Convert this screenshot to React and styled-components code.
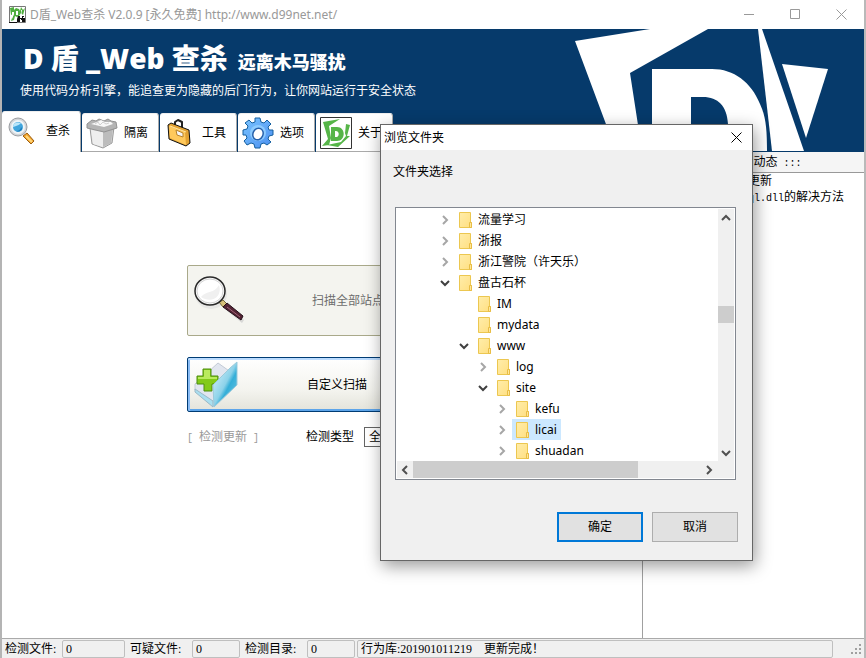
import React from 'react';
import styled, { createGlobalStyle } from 'styled-components';

const uiFont = '"Noto Sans", "Noto Sans CJK SC", sans-serif';
const songFont = '"Liberation Serif", "Noto Sans CJK SC", serif';

const GlobalStyle = createGlobalStyle`
    * {
        box-sizing: border-box;
    }
    body {
        margin: 0;
        background: #fff;
        color: #000;
        font-family: ${songFont};
        font-size: 12px;
        line-height: 16px;
    }
    button, select {
        font: inherit;
        color: inherit;
    }
    ul {
        margin: 0;
        padding: 0;
        list-style: none;
    }
`;

const Window = styled.div`
    position: relative;
    display: flex;
    flex-direction: column;
    min-height: 100vh;
    border-left: 2px solid #b4b4b4;
    border-right: 2px solid #b9b9b9;
    overflow: hidden;
`;

const TitleBar = styled.header`
    display: flex;
    align-items: center;
    height: 29px;
    padding-left: 7px;
    color: #999;
    font-family: ${uiFont};
`;

const WindowTitle = styled.h1`
    flex: 1;
    margin: 0 0 0 4px;
    font-size: 12px;
    font-weight: 400;
    white-space: nowrap;
`;

const CaptionButton = styled.button`
    display: flex;
    align-items: center;
    justify-content: center;
    width: ${({ $width }) => $width || 46}px;
    height: 25px;
    padding: 0;
    border: 0;
    background: transparent;
`;

const Banner = styled.div`
    display: flex;
    justify-content: space-between;
    height: 123px;
    background: #063a6b;
    color: #fff;
`;

const BannerMain = styled.div`
    display: flex;
    flex-direction: column;
    justify-content: space-between;
    white-space: nowrap;
`;

const BannerText = styled.div`
    padding: 9px 0 0 18px;
    font-family: "Noto Sans CJK SC", sans-serif;
`;

const Brand = styled.div`
    display: flex;
    align-items: baseline;
    gap: 10px;
    padding-left: 3px;
    font-size: 28px;
    font-weight: 900;
    line-height: 40px;
`;

const BrandName = styled.span`
    font-family: "Open Sans", "Noto Sans CJK SC", sans-serif;
    font-weight: 800;
`;

const Slogan = styled.span`
    font-size: 18px;
`;

const Intro = styled.p`
    margin: 0;
    line-height: 18px;
`;

const BannerLogo = styled.svg`
    flex: none;
    width: 304px;
    height: 122px;
`;

const Tabs = styled.div`
    display: flex;
    align-items: flex-end;
    gap: 1px;
`;

const Tab = styled.button`
    display: flex;
    align-items: center;
    gap: 6px;
    width: ${({ $active }) => ($active ? 79 : 77)}px;
    height: ${({ $active }) => ($active ? 41 : 39)}px;
    padding: 0 0 ${({ $active }) => ($active ? 3 : 0)}px ${({ $active }) => ($active ? 6 : 4)}px;
    border: 1px solid #aaa;
    border-width: 1px 1px ${({ $active }) => ($active ? 0 : 1)}px 0;
    border-top-color: #eee;
    border-radius: 3px 3px 0 0;
    background: #fff;
    color: #000;
    white-space: nowrap;
`;

const TabIcon = styled.span`
    display: flex;
    flex: none;
    justify-content: ${({ $active }) => ($active ? 'flex-start' : 'center')};
    width: 32px;
`;

const Body = styled.main`
    display: flex;
    flex: 1;
`;

const ScanPane = styled.section`
    flex: 1;
    padding: 113px 0 0 185px;
`;

const ScanButton = styled.button`
    display: flex;
    align-items: center;
    gap: ${({ $gap }) => $gap}px;
    width: 270px;
    height: ${({ $height }) => $height}px;
    margin-bottom: 21px;
    padding: 0 6px;
    border: 1px solid #a9a98a;
    border-radius: 2px;
    background: #f4f4ef;
    color: #6d6d6d;
    white-space: nowrap;
`;

const PrimaryScanButton = styled(ScanButton)`
    margin-bottom: 15px;
    border-color: #003c74;
    background: linear-gradient(#fff, #f4f4ef 60%, #e3e3da);
    box-shadow: inset 0 2px #bcdcff, inset 2px 0 #8abcf5, inset 0 -2px #5da5ea;
    color: #000;
`;

const OptionRow = styled.div`
    display: flex;
    align-items: center;
    height: 20px;
`;

const UpdateButton = styled.button`
    width: 119px;
    padding: 0;
    border: 0;
    background: none;
    color: #999;
    text-align: left;
    white-space: pre;
`;

const TypeLabel = styled.label`
    display: flex;
    align-items: center;
    gap: 10px;
`;

const TypeSelect = styled.select`
    width: 90px;
    height: 20px;
    padding: 0;
    border: 1px solid #646464;
    border-radius: 0;
    background: #fff;
`;

const NewsPane = styled.aside`
    width: 222px;
    border-left: 1px solid #a0a0a0;
`;

const NewsHeader = styled.h2`
    margin: 0;
    padding: 2px 0;
    border-bottom: 1px solid #999;
    background: #f5f5f5;
    font-size: 12px;
    font-weight: 400;
    text-align: center;
    white-space: pre;
`;

const NewsItem = styled.li`
    padding-left: 9px;
    white-space: nowrap;
`;

const Mono = styled.span`
    font-family: "Liberation Mono", monospace;
    font-size: 10px;
    line-height: 10px;
`;

const StatusBar = styled.footer`
    display: flex;
    align-items: center;
    height: 20px;
    padding-left: 3px;
    border-top: 1px solid #aaa;
    background: #f0f0f0;
    white-space: pre;
`;

const StatusLabel = styled.label`
    width: ${({ $width }) => $width}px;
`;

const StatusField = styled.output`
    flex: ${({ $width }) => ($width ? 'none' : 1)};
    width: ${({ $width }) => $width}px;
    height: 18px;
    margin-right: ${({ $gap }) => $gap}px;
    padding-left: 3px;
    border: 1px solid #bfbfbf;
    border-radius: 2px;
`;

const Dialog = styled.div`
    position: absolute;
    top: 124px;
    left: 378px;
    width: 373px;
    border: 1px solid #666;
    background: #f0f0f0;
    box-shadow: 2px 5px 16px rgba(0, 0, 0, 0.4);
    font-family: ${uiFont};
`;

const DialogTitle = styled.div`
    display: flex;
    align-items: center;
    justify-content: space-between;
    height: 25px;
    padding-left: 3px;
    background: #fff;
`;

const DialogMessage = styled.p`
    margin: 0;
    padding: 14px 12px 27px;
`;

const TreeBox = styled.div`
    display: grid;
    grid-template-columns: 1fr 16px;
    margin: 0 16px 0 14px;
    padding: 1px;
    border: 1px solid #828790;
    background: #fff;
`;

const TreeRow = styled.li`
    display: flex;
    align-items: center;
    gap: 5px;
    height: 21px;
    padding-left: ${({ $level }) => 43 + $level * 19}px;
`;

const Toggle = styled.button`
    display: flex;
    align-items: center;
    justify-content: center;
    width: 10px;
    height: 16px;
    padding: 0;
    border: 0;
    background: none;
    visibility: ${({ $hidden }) => ($hidden ? 'hidden' : 'visible')};

    svg {
        flex: none;
    }
`;

const Folder = styled.span`
    display: flex;
    align-items: center;
    gap: 6px;
    height: 21px;
    padding: 0 4px;
    background: ${({ $selected }) => ($selected ? '#cce8ff' : 'transparent')};
    white-space: nowrap;
`;

const ScrollBar = styled.div`
    display: flex;
    flex-direction: ${({ $horizontal }) => ($horizontal ? 'row' : 'column')};
    grid-column: ${({ $horizontal }) => ($horizontal ? '1 / -1' : 'auto')};
    padding-right: ${({ $horizontal }) => ($horizontal ? 17 : 0)}px;
    background: #f0f0f0;
`;

const ScrollButton = styled.button`
    display: flex;
    flex: none;
    align-items: center;
    justify-content: center;
    width: 16px;
    height: 17px;
    padding: 0;
    border: 0;
    background: none;
`;

const ScrollSpace = styled.div`
    flex: ${({ $grow }) => $grow} 0 0;
    background: ${({ $thumb }) => ($thumb ? '#cdcdcd' : 'transparent')};
`;

const DialogActions = styled.div`
    display: flex;
    justify-content: flex-end;
    gap: 9px;
    padding: 32px 14px 18px;
`;

const ActionButton = styled.button`
    width: 86px;
    height: 30px;
    padding: 0;
    border: ${({ $primary }) => ($primary ? '2px solid #0078d7' : '1px solid #adadad')};
    background: #e1e1e1;
`;

const CloseIcon = ({ color }) => (
    <svg width="11" height="11" viewBox="0 0 11 11" stroke={color} fill="none">
        <path d="M.5 .5 10.5 10.5M10.5 .5 .5 10.5" />
    </svg>
);

const arrows = {
    right: 'M3 1 7 5 3 9',
    left: 'M7 1 3 5 7 9',
    down: 'M1 3 5 7 9 3',
    up: 'M1 7 5 3 9 7',
};

const Arrow = ({ to, color = '#505050' }) => (
    <svg width="10" height="10" viewBox="0 0 10 10">
        <path d={arrows[to]} fill="none" stroke={color} strokeWidth="2" />
    </svg>
);

const FolderIcon = () => (
    <svg width="13" height="16" viewBox="0 0 13 16">
        <defs>
            <linearGradient id="folderFill" x2="1" y2="1">
                <stop offset="0" stopColor="#ffedaa" />
                <stop offset="1" stopColor="#ffdf81" />
            </linearGradient>
        </defs>
        <path d="M.5 .5h11v10h1v5H.5z" fill="url(#folderFill)" stroke="#ecc750" />
        <path d="M10.5 15.5v-5h2v5z" fill="#ffe79a" stroke="#e8bd45" />
    </svg>
);

const AppIcon = () => (
    <svg width="17" height="17" viewBox="0 0 17 17">
        <path d="M.5 .5h16v16H.5z" fill="#fff" stroke="#777" />
        <path d="M0 16.5h8" stroke="#111" />
        <path d="M1 2 5 1v3l2-2 3 1 1 2 1-4 2 3 2-2-2 7-2-2-2 3-2 1-2-1-1 4-3 1 1-3 2-4-3 1z" fill="#4fae3e" />
        <path d="M3 6h2v2l-2 5zM7 5h2v4H7zM12 4h1v5z" fill="#fff" />
        <path d="M9 10h2v2h2v-2h2v2h1v4h-3v-2h-2v2H8v-3z" fill="#111" />
        <path d="M11 13h1v1h-1zM14 11h1v1h-1zM12 15h1v1h-1z" fill="#fff" />
    </svg>
);

const BannerMark = () => (
    <BannerLogo viewBox="0 0 304 122" fill="#fff">
        <path d="M15 12 90 0H148L70 44 82 122H56z" />
        <path
            fillRule="evenodd"
            d="M92 40H152C174 40 191 53 200 75 206 88 207 101 207 122H92zM131 68V122H168V95C167 77 158 68 143 68z"
        />
        <path d="M198 0h4L244 122H212z" />
        <path d="M222 35 268 40 246 109z" />
    </BannerLogo>
);

const SearchIcon = () => (
    <svg width="28" height="30" viewBox="0 0 28 30">
        <path d="M15 20 19 17 26 25 23 28z" fill="#f3a52c" stroke="#9c5d10" />
        <path d="M18 20 24 26" stroke="#ffd77d" strokeWidth="2" />
        <circle cx="10" cy="11" r="9" fill="#d3d5d8" stroke="#9a9da1" />
        <circle cx="10" cy="11" r="6" fill="#42a5dc" stroke="#eef4f8" strokeWidth="2" />
        <path d="M5 11c0-4 5-6 8-3-2 0-3 2-8 3z" fill="#b9e6fa" />
        <path d="M8 15c3 0 5-2 5-4 3 2-1 6-5 4z" fill="#1b7dbd" />
    </svg>
);

const BinIcon = () => (
    <svg width="32" height="32" viewBox="0 0 32 32" strokeLinejoin="round">
        <path d="M4 11 28 10 26 26 17 31 6 27z" fill="#dcdcdc" stroke="#9a9a9a" />
        <path d="M17 15 27 11 25 26 17 30z" fill="#bcbcbc" />
        <path d="M5 13 17 15V30L7 27z" fill="#eee" />
        <path d="M1 7 6 3 10 4 13 2 18 4 22 2 25 4 30 5 31 11 18 15 1 11z" fill="#b4b4b4" stroke="#929292" />
        <path d="M5 7 11 5 15 3 19 5 25 5 27 7 18 10z" fill="#f8f8f8" />
        <path d="M9 7 12 5 14 8 17 5 20 7 23 6" fill="none" stroke="#d0d0d0" />
    </svg>
);

const CaseIcon = () => (
    <svg width="26" height="30" viewBox="2 0 26 30" strokeLinejoin="round">
        <path d="M10 8V4l3-2 4 2v6" fill="none" stroke="#222" strokeWidth="2" />
        <path d="M3 7 6 5 24 12 25 25 21 28 4 21z" fill="#e2a233" stroke="#111" />
        <path d="M4 8 20 14 21 27 5 20z" fill="#ffc95c" />
        <path d="M5 8 21 14" stroke="#ffe7a5" />
        <path d="M11 12 18 15V19L12 17z" fill="#f6f6f6" stroke="#b7822b" />
    </svg>
);

const GearIcon = () => (
    <svg width="32" height="32" viewBox="0 0 32 32" strokeLinejoin="round">
        <defs>
            <linearGradient id="gearFill" y2="1">
                <stop offset="0" stopColor="#7ac4ff" />
                <stop offset="1" stopColor="#4b8ff0" />
            </linearGradient>
        </defs>
        <path
            d="M13 5 13 1 18 1 19 5 22 6 25 3 29 7 26 10 27 13 31 13 31 18 27 19 26 22 29 25 25 28 22 26 19 27 18 31 13 31 12 27 9 26 5 28 2 24 5 21 4 18 1 18 1 13 5 12 6 9 3 6 7 3 10 6z"
            fill="url(#gearFill)"
            stroke="#145f9f"
        />
        <circle cx="16" cy="16" r="8" fill="#8ccbff" />
        <ellipse cx="16" cy="17" rx="5" ry="6" transform="rotate(25 16 17)" fill="#fff" stroke="#2862ac" strokeWidth="1.5" />
    </svg>
);

const AboutIcon = () => (
    <svg width="32" height="32" viewBox="0 0 32 32">
        <path d="M.5 .5h31v31H.5z" fill="#fff" stroke="#333" />
        <g fill="#56b548">
            <path d="M3 5 20 2 9 9 11 21 9 28 2 29 8 22z" />
            <path fillRule="evenodd" d="M11 10H17C26 10 26 24 17 24H11zM15 14V20C20 21 20 13 15 14z" />
            <path d="M21 5 25 16 26 7 30 8 27 19 30 19 18 30 7 28 21 25 26 19z" />
        </g>
    </svg>
);

const LensIcon = () => (
    <svg width="52" height="50" viewBox="0 0 52 50">
        <ellipse cx="17" cy="18" rx="16" ry="15" fill="#ddd" opacity=".6" />
        <path d="M32 34 36 32 50 44 48 47z" fill="#ccc" opacity=".7" />
        <path d="M25 26 29 24 33 28 29 31z" fill="#d8c17a" stroke="#776639" />
        <path d="M29 31 33 27 49 40 47 44z" fill="#542334" stroke="#241019" />
        <path d="M33 31 46 41" stroke="#a06678" />
        <ellipse cx="16" cy="15" rx="15" ry="14" fill="#f9f9f9" stroke="#292929" strokeWidth="1.5" />
        <ellipse cx="16" cy="15" rx="13" ry="12" fill="#fff" stroke="#d4d4d4" />
        <path d="M7 21C13 14 20 18 25 9 29 21 17 28 7 21z" fill="#f0f0f0" />
    </svg>
);

const AddFolderIcon = () => (
    <svg width="45" height="47" viewBox="0 0 45 47" strokeLinejoin="round">
        <defs>
            <linearGradient id="flapFill" y2="1">
                <stop offset="0" stopColor="#e5f8ff" />
                <stop offset=".5" stopColor="#8cd2e9" />
                <stop offset=".6" stopColor="#35afd8" />
                <stop offset="1" stopColor="#79c9e5" />
            </linearGradient>
        </defs>
        <path d="M1 23 24 2 38 12V28L20 45 1 29z" fill="#e1e6ef" stroke="#c3cbd6" />
        <path d="M1 28 19 40V46L1 31z" fill="#a9dff0" stroke="#9cb8c6" />
        <path d="M9 8h8v7h7v8h-6v7h-8v-7H3v-8h6z" fill="#82ca18" stroke="#4c8c0e" />
        <path d="M10 9h6v7h7v2H4v-2h6z" fill="#b9eb5d" />
        <path d="M19 24 36 7 43 1V24L20 46z" fill="url(#flapFill)" stroke="#9ccadb" />
    </svg>
);

const SizeGrip = () => (
    <svg width="31" height="15" viewBox="0 0 31 15" fill="#a0a0a0">
        <path d="M26 3h2v2h-2zM26 7h2v2h-2zM22 7h2v2h-2zM26 11h2v2h-2zM22 11h2v2h-2zM18 11h2v2h-2z" />
    </svg>
);

const tabs = [
    { name: '查杀', icon: <SearchIcon />, active: true },
    { name: '隔离', icon: <BinIcon /> },
    { name: '工具', icon: <CaseIcon /> },
    { name: '选项', icon: <GearIcon /> },
    { name: '关于', icon: <AboutIcon /> },
];

const folders = [
    { name: '流量学习', level: 0, state: 'right' },
    { name: '浙报', level: 0, state: 'right' },
    { name: '浙江警院（许天乐）', level: 0, state: 'right' },
    { name: '盘古石杯', level: 0, state: 'down' },
    { name: 'IM', level: 1 },
    { name: 'mydata', level: 1 },
    { name: 'www', level: 1, state: 'down' },
    { name: 'log', level: 2, state: 'right' },
    { name: 'site', level: 2, state: 'down' },
    { name: 'kefu', level: 3, state: 'right' },
    { name: 'licai', level: 3, state: 'right', selected: true },
    { name: 'shuadan', level: 3, state: 'right' },
];

const counters = [
    { id: 'checked', name: '检测文件:', label: 57, field: 63, gap: 5 },
    { id: 'suspect', name: '可疑文件:', label: 62, field: 48, gap: 5 },
    { id: 'dirs', name: '检测目录:', label: 62, field: 48, gap: 2 },
];

const BrowseDialog = () => (
    <Dialog role="dialog" aria-labelledby="dialog-title">
        <DialogTitle>
            <span id="dialog-title">浏览文件夹</span>
            <CaptionButton $width={31} aria-label="关闭">
                <CloseIcon color="#000" />
            </CaptionButton>
        </DialogTitle>
        <DialogMessage>文件夹选择</DialogMessage>
        <TreeBox>
            <ul role="tree">
                {folders.map((folder) => (
                    <TreeRow key={folder.name} role="treeitem" aria-selected={!!folder.selected} $level={folder.level}>
                        <Toggle $hidden={!folder.state} aria-label={folder.name}>
                            <Arrow to={folder.state || 'right'} color={folder.state === 'down' ? '#404040' : '#a6a6a6'} />
                        </Toggle>
                        <Folder $selected={folder.selected}>
                            <FolderIcon />
                            {folder.name}
                        </Folder>
                    </TreeRow>
                ))}
            </ul>
            <ScrollBar>
                <ScrollButton aria-label="向上"><Arrow to="up" /></ScrollButton>
                <ScrollSpace $grow={80} />
                <ScrollSpace $grow={17} $thumb />
                <ScrollSpace $grow={121} />
                <ScrollButton aria-label="向下"><Arrow to="down" /></ScrollButton>
            </ScrollBar>
            <ScrollBar $horizontal>
                <ScrollButton aria-label="向左"><Arrow to="left" /></ScrollButton>
                <ScrollSpace $grow={224} $thumb />
                <ScrollSpace $grow={63} />
                <ScrollButton aria-label="向右"><Arrow to="right" /></ScrollButton>
            </ScrollBar>
        </TreeBox>
        <DialogActions>
            <ActionButton $primary>确定</ActionButton>
            <ActionButton>取消</ActionButton>
        </DialogActions>
    </Dialog>
);

const App = () => (
    <>
        <GlobalStyle />
        <Window>
            <TitleBar>
                <AppIcon />
                <WindowTitle>D盾_Web查杀 V2.0.9 [永久免费] http://www.d99net.net/</WindowTitle>
                <CaptionButton aria-label="最小化">
                    <svg width="11" height="11" viewBox="0 0 11 11"><path d="M0 5.5h10" stroke="#999" /></svg>
                </CaptionButton>
                <CaptionButton aria-label="最大化">
                    <svg width="11" height="11" viewBox="0 0 11 11"><path d="M.5 .5h9v9h-9z" fill="none" stroke="#999" /></svg>
                </CaptionButton>
                <CaptionButton aria-label="关闭">
                    <CloseIcon color="#999" />
                </CaptionButton>
            </TitleBar>

            <Banner>
                <BannerMain>
                    <BannerText>
                        <Brand>
                            <BrandName>D 盾 _Web 查杀</BrandName>
                            <Slogan>远离木马骚扰</Slogan>
                        </Brand>
                        <Intro>使用代码分析引擎，能追查更为隐藏的后门行为，让你网站运行于安全状态</Intro>
                    </BannerText>
                    <Tabs role="tablist">
                        {tabs.map((tab) => (
                            <Tab key={tab.name} role="tab" aria-selected={!!tab.active} $active={tab.active}>
                                <TabIcon $active={tab.active}>{tab.icon}</TabIcon>
                                {tab.name}
                            </Tab>
                        ))}
                    </Tabs>
                </BannerMain>
                <BannerMark />
            </Banner>

            <Body>
                <ScanPane>
                    <ScanButton $height={71} $gap={66} disabled>
                        <LensIcon />
                        扫描全部站点
                    </ScanButton>
                    <PrimaryScanButton $height={55} $gap={68}>
                        <AddFolderIcon />
                        自定义扫描
                    </PrimaryScanButton>
                    <OptionRow>
                        <UpdateButton><Mono>[ </Mono>检测更新<Mono> ]</Mono></UpdateButton>
                        <TypeLabel>
                            检测类型
                            <TypeSelect defaultValue="all">
                                <option value="all">全部文件</option>
                            </TypeSelect>
                        </TypeLabel>
                    </OptionRow>
                </ScanPane>
                <NewsPane>
                    <NewsHeader><Mono>::: </Mono>新闻动态<Mono> :::</Mono></NewsHeader>
                    <ul>
                        <NewsItem>行为库与检测规则更新</NewsItem>
                        <NewsItem>关于找不到<Mono>libmysql.dll</Mono>的解决方法</NewsItem>
                    </ul>
                </NewsPane>
            </Body>

            <StatusBar>
                {counters.map((item) => (
                    <React.Fragment key={item.id}>
                        <StatusLabel htmlFor={item.id} $width={item.label}>{item.name}</StatusLabel>
                        <StatusField id={item.id} $width={item.field} $gap={item.gap}>0</StatusField>
                    </React.Fragment>
                ))}
                <StatusField $gap={0}>行为库:201901011219    更新完成！</StatusField>
                <SizeGrip />
            </StatusBar>

            <BrowseDialog />
        </Window>
    </>
);

export default App;
